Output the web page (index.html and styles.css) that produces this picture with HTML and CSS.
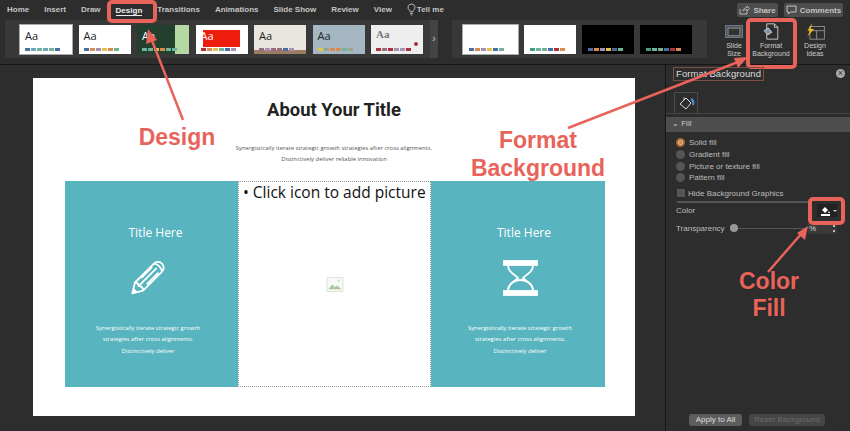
FILE: index.html
```html
<!DOCTYPE html>
<html>
<head>
    <title>Format Background</title>
    <link rel="stylesheet" href="styles.css">
</head>
<body>
<div class="app">
    <div class="tabs">
        <span class="tab">Home</span>
        <span class="tab">Insert</span>
        <span class="tab">Draw</span>
        <span class="tab active">Design</span>
        <span class="tab">Transitions</span>
        <span class="tab">Animations</span>
        <span class="tab">Slide Show</span>
        <span class="tab">Review</span>
        <span class="tab">View</span>
        <span class="tab tell">
            <svg width="9" height="13" viewBox="0 0 9 13"><path d="M4.500 1a3.400 3.400 0 0 0-2 6.200c.4.400.6.900.6 1.600h2.800c0-.7.2-1.200.6-1.600a3.400 3.400 0 0 0-2-6.200zM3.200 10.500h2.600M3.800 12h1.400" fill="none" stroke="#bbb" stroke-width="1"/></svg>
            Tell me
        </span>
        <div class="tab-right">
            <span class="top-btn share">
                <svg width="11" height="10" viewBox="0 0 11 10"><path d="M1 4v5h7V6M4 6c0-2 2-3.500 4-3.500V1l2.500 2.500L8 6V4.500C6 4.500 5 5 4 6z" fill="none" stroke="#b5b5b5"/></svg>
                Share
            </span>
            <span class="top-btn comments">
                <svg width="11" height="10" viewBox="0 0 11 10"><path d="M1 1h9v6H4.500L2.500 9V7H1z" fill="none" stroke="#c5c5c5"/></svg>
                Comments
            </span>
        </div>
    </div>

    <div class="ribbon">
        <div class="gallery themes">
            <div class="thumb selected"><b class="aa">Aa</b><i class="dots"><u class="c1"></u><u class="c2"></u><u class="c3"></u><u class="c2"></u><u class="c3"></u><u class="c1"></u></i></div>
            <div class="thumb"><b class="aa">Aa</b><i class="dots"><u class="c1"></u><u class="c4"></u><u class="c6"></u><u class="c5"></u><u class="c4"></u><u class="c3"></u></i></div>
            <div class="thumb green"><b class="aa">Aa</b><i class="dots"><u class="c3"></u><u class="c3"></u><u class="c5"></u><u class="c4"></u><u class="c3"></u><u class="c3"></u></i></div>
            <div class="thumb red"><b class="aa">Aa</b><i class="dots"><u class="c7"></u><u class="c4"></u><u class="c5"></u><u class="c3"></u><u class="c1"></u><u class="c6"></u></i></div>
            <div class="thumb beige"><b class="aa">Aa</b><i class="dots"><u class="c8"></u><u class="c6"></u><u class="c8"></u><u class="c8"></u><u class="c1"></u><u class="c6"></u></i></div>
            <div class="thumb slate"><b class="aa">Aa</b><i class="dots"><u class="c5"></u><u class="c9"></u><u class="c4"></u><u class="c4"></u><u class="c3"></u><u class="c9"></u></i></div>
            <div class="thumb grey"><b class="aa serif">Aa</b><i class="dots"><u class="c7"></u><u class="c8"></u><u class="c7"></u><u class="c6"></u><u class="c6"></u><u class="c7"></u></i></div>
        </div>
        <div class="gallery-more">&#8250;</div>
        <div class="gallery variants">
            <div class="thumb selected wide"><i class="dots"><u class="c1"></u><u class="c4"></u><u class="c6"></u><u class="c5"></u><u class="c1"></u><u class="c3"></u></i></div>
            <div class="thumb"><i class="dots"><u class="c10"></u><u class="c3"></u><u class="c3"></u><u class="c1"></u><u class="c7"></u><u class="c4"></u></i></div>
            <div class="thumb black"><i class="dots"><u class="c1"></u><u class="c4"></u><u class="c6"></u><u class="c5"></u><u class="c1"></u><u class="c3"></u></i></div>
            <div class="thumb black"><i class="dots"><u class="c10"></u><u class="c3"></u><u class="c3"></u><u class="c1"></u><u class="c7"></u><u class="c4"></u></i></div>
        </div>
        <div class="rb-tools">
            <div class="rb-tool size">
                <svg width="24" height="20" viewBox="0 0 24 20"><rect x="2" y="3" width="20" height="14" fill="#4a5563" stroke="#77818e"/><rect x="5" y="6" width="14" height="9" fill="#333" stroke="#999"/></svg>
                <span>Slide<br>Size</span>
            </div>
            <div class="rb-tool format">
                <svg width="24" height="20" viewBox="0 0 24 20"><path d="M7 1h9l4 4v14H7z" fill="none" stroke="#ddd"/><path d="M16 1v4h4" fill="none" stroke="#ddd"/><path d="M4 9l5-3 4 5-5 3z" fill="#7a93ac" stroke="#ddd"/></svg>
                <span>Format<br>Background</span>
            </div>
            <div class="rb-tool ideas">
                <svg width="24" height="20" viewBox="0 0 24 20"><rect x="6" y="4" width="17" height="15" fill="none" stroke="#999"/><path d="M6 9h17M14 9v10" stroke="#999"/><path d="M9 0L3 9h3l-3 7 8-9H7z" fill="#e8b923"/></svg>
                <span>Design<br>Ideas</span>
            </div>
        </div>
    </div>

    <div class="main">
        <div class="canvas">
            <div class="slide">
                <h1>About Your Title</h1>
                <p class="lead">Synergistically iterate strategic growth strategies after cross alignments.<br>Distinctively deliver reliable innovation</p>
                <div class="cols">
                    <div class="col teal first">
                        <h2>Title Here</h2>
                        <svg class="col-icon" width="37" height="36" viewBox="0 0 40 40"><g fill="none" stroke="#fff" stroke-width="2" stroke-linejoin="round"><path d="M2 37l3-12L26 4c3-3 7-2 9 0s3 6 0 9L14 34z"/><path d="M5 25c3 0 4 1 4 4 3 0 5 1 5 5M26 4c4 0 9 5 9 9M9 29L29 9M12 20L24 8M18 27L31 14"/></g><path d="M2 37l1.500-6 4.500 4.500z" fill="#fff"/></svg>
                        <p>Synergistically iterate strategic growth<br>strategies after cross alignments.<br>Distinctively deliver</p>
                    </div>
                    <div class="col placeholder">
                        <div class="click-text">&bull; Click icon to add picture</div>
                        <svg class="pic-icon" width="18" height="15" viewBox="0 0 18 16"><rect x=".5" y=".5" width="17" height="15" fill="#f7f9f5" stroke="#dde3da"/><path d="M2 13l4-5 3 3 2-2 5 4z" fill="#a9c79b"/><circle cx="13" cy="4" r="1.200" fill="#c5d9bb"/></svg>
                    </div>
                    <div class="col teal last">
                        <h2>Title Here</h2>
                        <svg class="col-icon" width="35" height="36" viewBox="0 0 35 36"><g fill="none" stroke="#fff" stroke-width="1.800"><rect x="1" y="1" width="33" height="4" fill="#fff"/><rect x="1" y="31" width="33" height="4" fill="#fff"/><path d="M5 5c0 7 6 9 10 13-4 4-10 6-10 13M30 5c0 7-6 9-10 13 4 4 10 6 10 13"/><path d="M5 31c0-7 6-11 12.500-11S30 24 30 31"/></g></svg>
                        <p>Synergistically iterate strategic growth<br>strategies after cross alignments.<br>Distinctively deliver</p>
                    </div>
                </div>
            </div>
        </div>

        <div class="pane">
            <div class="pane-head">
                <span class="pane-title">Format Background</span>
                <span class="pane-close">&times;</span>
            </div>
            <div class="pane-tabs">
                <div class="pane-tab">
                    <svg width="16" height="15" viewBox="0 0 16 15"><path d="M1 8l6-6 5 5-5 6z" fill="none" stroke="#ddd"/><path d="M5 4V1.500" stroke="#ddd"/><path d="M12 3c2 1 3 3 2 6" fill="none" stroke="#4a90d9" stroke-width="2"/></svg>
                </div>
            </div>
            <div class="section-bar"><span class="chev">&#8964;</span> Fill</div>
            <div class="options">
                <div class="opt"><span class="radio on"></span>Solid fill</div>
                <div class="opt"><span class="radio"></span>Gradient fill</div>
                <div class="opt"><span class="radio"></span>Picture or texture fill</div>
                <div class="opt"><span class="radio"></span>Pattern fill</div>
            </div>
            <div class="check-row"><span class="check"></span>Hide Background Graphics</div>
            <div class="divider"></div>
            <div class="prop-row">
                <span>Color</span>
                <span class="color-btn">
                    <svg width="11" height="11" viewBox="0 0 11 11"><path d="M2 5l3-3 3 3-3 3z" fill="#fff"/><path d="M9 6l1 2H8z" fill="#fff"/><rect x="1" y="9" width="9" height="2" fill="#fff"/></svg>
                    <i class="caret"></i>
                </span>
            </div>
            <div class="prop-row transp">
                <span>Transparency</span>
                <span class="slider"><i class="knob"></i></span>
                <span class="spin">%<i class="spin-arrows"></i></span>
            </div>
            <div class="pane-foot">
                <span class="foot-btn">Apply to All</span>
                <span class="foot-btn off">Reset Background</span>
            </div>
        </div>
    </div>

    <!-- callouts drawn on top of the screenshot -->
    <div class="box box-design"></div>
    <div class="box box-format"></div>
    <div class="box box-color"></div>
    <div class="box-title"></div>
    <svg class="arrows" width="850" height="431" viewBox="0 0 850 431">
        <g stroke="#e8635a" stroke-width="2.500" fill="#e8635a">
            <path d="M183 120L151 38"/>
            <path d="M148 29l9 11-11 4z" stroke="none"/>
            <path d="M568 128L738 62"/>
            <path d="M748 57l-10 11-4-10z" stroke="none"/>
            <path d="M768 272L802 233"/>
            <path d="M808 226l-3 14-8-7z" stroke="none"/>
        </g>
    </svg>
    <div class="note note-design">Design</div>
    <div class="note note-format">Format<br>Background</div>
    <div class="note note-color">Color<br>Fill</div>
</div>
</body>
</html>
```

FILE: styles.css
```css
* {
    box-sizing: border-box;
}
html, body {
    margin: 0;
    padding: 0;
}
body {
    width: 850px;
    height: 431px;
    overflow: hidden;
    background: #2d2d2d;
    font-family: "Liberation Sans", Arial, sans-serif;
    font-variant-ligatures: none;
}
.app {
    position: relative;
    width: 850px;
    height: 431px;
    display: flex;
    flex-direction: column;
}

/* top tabs */
.tabs {
    height: 19px;
    display: flex;
    align-items: center;
    padding-left: 7px;
    gap: 15px;
    font-size: 8px;
    color: #c4c4c4;
    font-weight: bold;
}
.tab.active {
    color: #eee;
    border-bottom: 1px solid #eee;
    margin-top: 2px;
}
.tell {
    display: flex;
    align-items: center;
    gap: 1px;
}
.tab-right {
    margin-left: auto;
    display: flex;
    gap: 6px;
    padding: 3px 7px 0 0;
    align-self: flex-start;
}
.top-btn {
    height: 14px;
    background: #4d4d4d;
    border-radius: 2px;
    display: flex;
    align-items: center;
    justify-content: center;
    gap: 3px;
}
.share {
    width: 41px;
}
.comments {
    width: 59px;
}

/* ribbon */
.ribbon {
    height: 46px;
    display: flex;
    align-items: stretch;
    padding: 1px 0 6px 5px;
    border-bottom: 1px solid #161616;
}
.gallery {
    background: #383838;
    display: flex;
    align-items: center;
    gap: 6.500px;
}
.themes {
    width: 425px;
    padding-left: 15px;
}
.gallery-more {
    width: 8px;
    margin: 0 14px 0 0;
    background: #444;
    color: #ccc;
    font-size: 10px;
    text-align: center;
    line-height: 38px;
}
.variants {
    width: 255px;
    padding-left: 11px;
    gap: 6px;
}
.thumb {
    position: relative;
    width: 52px;
    height: 29px;
    background: #fff;
    flex: none;
    overflow: hidden;
}
.thumb.wide {
    width: 55px;
}
.thumb.selected {
    outline: 1px solid #aaa;
    outline-offset: 0;
}
.thumb .aa {
    position: absolute;
    left: 5px;
    top: 3px;
    font-family: "Open Sans", sans-serif;
    font-weight: normal;
    font-size: 11px;
    color: #222;
}
.thumb .serif {
    font-family: "Liberation Serif", serif;
    font-weight: bold;
    color: #777;
}
.dots {
    position: absolute;
    left: 5px;
    bottom: 3px;
    display: flex;
    gap: 1px;
}
.dots u {
    width: 5px;
    height: 3px;
}
.variants .dots {
    left: 6px;
}
.c1 { background: #4a6ea0; }
.c2 { background: #6fa8b8; }
.c3 { background: #70b39a; }
.c4 { background: #d98a55; }
.c5 { background: #e3c24e; }
.c6 { background: #a98fb5; }
.c7 { background: #a8333a; }
.c8 { background: #9b6b80; }
.c9 { background: #9aa58a; }
.c10 { background: #3f9c8a; }
.thumb.green {
    background: linear-gradient(90deg, #23402f 73%, #b5d8a5 74%);
}
.thumb.green .aa {
    color: #fff;
}
.thumb.red::before {
    content: "";
    position: absolute;
    left: 7px;
    top: 5px;
    width: 37px;
    height: 17px;
    background: #ee1c0c;
}
.thumb.red .aa {
    color: #fff;
}
.thumb.beige {
    background: linear-gradient(#e9e6df 85%, #9a7d63 86%);
}
.thumb.slate {
    background: #a5b7c2;
}
.thumb.grey {
    background: #eee;
}
.thumb.grey::after {
    content: "";
    position: absolute;
    right: 5px;
    top: 17px;
    width: 4px;
    height: 4px;
    border-radius: 50%;
    background: #a8333a;
}
.thumb.black {
    background: #000;
}
.rb-tools {
    display: flex;
    padding-left: 11.500px;
    color: #ccc;
    font-size: 7px;
    text-align: center;
}
.rb-tool {
    line-height: 8px;
    display: flex;
    flex-direction: column;
    align-items: center;
    gap: 2px;
    padding-top: 3px;
}
.size {
    width: 31px;
}
.format {
    width: 43px;
}
.ideas {
    width: 45px;
}

/* body area */
.main {
    flex: 1;
    display: flex;
    min-height: 0;
}
.canvas {
    width: 665px;
    padding: 13px 0 0 33px;
}
.slide {
    width: 602px;
    height: 338px;
    background: #fff;
    padding: 22px 32px 0;
    text-align: center;
}
.slide h1 {
    margin: 0;
    font-family: Roboto, sans-serif;
    font-size: 18.400px;
    line-height: 20px;
    font-weight: bold;
    color: #222;
}
.lead {
    margin: 23px 0 0;
    font-family: "Open Sans", sans-serif;
    font-size: 5.900px;
    line-height: 11px;
    color: #555;
}
.cols {
    display: flex;
    margin-top: 16px;
    height: 206px;
}
.col {
    flex: none;
}
.teal {
    width: 173px;
    background: #58b4be;
    color: #fff;
    display: flex;
    flex-direction: column;
    align-items: center;
    padding-top: 44px;
}
.teal.first {
    padding-right: 7px;
}
.teal.last {
    width: 174px;
    padding-left: 4px;
}
.teal h2 {
    margin: 0;
    font-family: "Open Sans", sans-serif;
    font-weight: normal;
    font-size: 12px;
    line-height: 16px;
}
.teal.first h2 {
    margin-left: 15px;
}
.teal.last h2 {
    margin-left: 8px;
}
.col-icon {
    margin-top: 19px;
}
.teal p {
    margin: 27px 0 0;
    font-family: "Open Sans", sans-serif;
    font-size: 5.900px;
    line-height: 11.300px;
}
.placeholder {
    width: 193px;
    border: 1px dotted #999;
    position: relative;
    text-align: left;
}
.click-text {
    font-family: "Open Sans", sans-serif;
    font-size: 15.500px;
    line-height: 20px;
    color: #111;
    padding-left: 4px;
}
.pic-icon {
    display: block;
    margin: 75px auto 0;
}

/* right pane */
.pane {
    width: 185px;
    border-left: 1px solid #161616;
    position: relative;
    color: #bdbdbd;
    font-size: 8px;
    display: flex;
    flex-direction: column;
}
.pane-head {
    height: 17px;
    display: flex;
    justify-content: space-between;
    align-items: center;
    padding: 0 5px 0 10px;
}
.pane-title {
    font-size: 9.500px;
    color: #ddd;
    letter-spacing: .1px;
}
.pane-close {
    width: 9px;
    height: 9px;
    border-radius: 50%;
    background: #aaa;
    color: #333;
    font-size: 9px;
    line-height: 9px;
    text-align: center;
}
.pane-tabs {
    height: 32px;
    padding: 10px 0 0 8px;
    border-bottom: 1px solid #454545;
}
.pane-tab {
    width: 24px;
    height: 22px;
    border: 1px solid #4a4a4a;
    border-bottom: 0;
    padding: 3px 4px;
}
.section-bar {
    height: 15px;
    margin-top: 3px;
    background: #4e4e4e;
    color: #ccc;
    font-size: 8px;
    line-height: 14px;
    padding-left: 6px;
}
.chev {
    font-size: 8px;
}
.options {
    padding: 5px 0 0 10px;
}
.opt {
    height: 11.700px;
    display: flex;
    align-items: center;
    gap: 4px;
}
.radio {
    width: 9px;
    height: 9px;
    border-radius: 50%;
    background: #555;
}
.radio.on {
    background: #c8803f;
    border: 2.500px solid #a86c3a;
    box-shadow: inset 0 0 0 1px #f0c49a;
}
.check-row {
    display: flex;
    align-items: center;
    gap: 3px;
    padding: 4px 0 0 11px;
    height: 15px;
}
.check {
    width: 8px;
    height: 8px;
    background: #555;
}
.divider {
    height: 2px;
    background: #555;
    margin: 2px 10px 0 11px;
    width: 135px;
}
.prop-row {
    display: flex;
    align-items: center;
    justify-content: space-between;
    padding: 0 13px 0 10px;
    height: 16px;
    position: relative;
}
.color-btn {
    width: 20px;
    height: 13px;
    background: #222;
    display: flex;
    align-items: center;
    gap: 2px;
    padding-left: 3px;
}
.caret {
    border: 2px solid transparent;
    border-top: 2px solid #ccc;
    margin-top: 2px;
}
.transp {
    justify-content: flex-start;
    gap: 5px;
    margin-top: 2px;
}
.slider {
    flex: 1;
    height: 1px;
    background: #555;
    position: relative;
}
.knob {
    position: absolute;
    left: 0;
    top: -4px;
    width: 8px;
    height: 8px;
    border-radius: 50%;
    background: #999;
}
.spin {
    width: 29px;
    height: 11px;
    margin-left: -2px;
    background: #3a3a3a;
    color: #ddd;
    line-height: 11px;
    padding-left: 1px;
    position: relative;
}
.spin-arrows {
    position: absolute;
    right: 2px;
    top: 2px;
    width: 2px;
    height: 7px;
    border-top: 2px solid #bbb;
    border-bottom: 2px solid #bbb;
}
.pane-foot {
    position: absolute;
    left: 23px;
    top: 349px;
    display: flex;
    gap: 7px;
}
.foot-btn {
    height: 12px;
    width: 53px;
    border-radius: 3px;
    background: #5d5d5d;
    color: #ddd;
    text-align: center;
    line-height: 12px;
}
.foot-btn.off {
    width: 76px;
    background: #454545;
    color: #6b6b6b;
}

/* callouts */
.box {
    position: absolute;
    border: 4px solid #e8635a;
    border-radius: 5px;
}
.box-design {
    left: 107px;
    top: 0;
    width: 50px;
    height: 23px;
}
.box-format {
    left: 746px;
    top: 18px;
    width: 51px;
    height: 51px;
}
.box-color {
    left: 808px;
    top: 197px;
    width: 37px;
    height: 28px;
}
.box-title {
    position: absolute;
    left: 673px;
    top: 67px;
    width: 91px;
    height: 14px;
    border: 1px solid #7d4f40;
}
.arrows {
    position: absolute;
    left: 0;
    top: 0;
}
.note {
    position: absolute;
    color: #e8635a;
    font-weight: bold;
    font-size: 23px;
    line-height: 28px;
    text-align: center;
}
.note-design {
    left: 127px;
    top: 123px;
    width: 100px;
}
.note-format {
    left: 448px;
    top: 126px;
    width: 180px;
}
.note-color {
    left: 719px;
    top: 268px;
    width: 100px;
    line-height: 27px;
}
```
